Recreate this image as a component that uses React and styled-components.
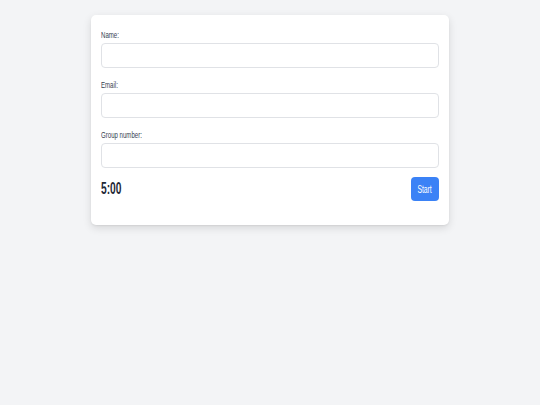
import React, { useState } from "react";
import styled, { createGlobalStyle } from "styled-components";

const GlobalStyle = createGlobalStyle`
  html, body {
    margin: 0;
    padding: 0;
    background: #f3f4f6;
    font-family: "Liberation Sans", Arial, sans-serif;
  }
`;

const Page = styled.div`
  min-height: 405px;
  display: flex;
  justify-content: center;
  align-items: flex-start;
  padding-top: 15px;
  box-sizing: border-box;
`;

const Card = styled.div`
  width: 358px;
  box-sizing: border-box;
  background: #ffffff;
  border-radius: 5px;
  box-shadow: 0 3px 8px rgba(0, 0, 0, 0.12), 0 1px 2px rgba(0, 0, 0, 0.06);
  padding: 12px 10px 24px;
`;

const Field = styled.div`
  display: flex;
  flex-direction: column;
  margin-bottom: 9px;
`;

const Label = styled.label`
  display: block;
  height: 14px;
  margin-bottom: 2px;
  font-size: 9.5px;
  line-height: 16px;
  color: #374151;
  white-space: nowrap;
  transform: scaleX(0.64);
  transform-origin: left center;
`;

const Input = styled.input`
  height: 25px;
  box-sizing: border-box;
  border: 1px solid #e0e2e6;
  border-radius: 4px;
  background: #fff;
  padding: 0 6px;
  outline: none;
`;

const Footer = styled.div`
  display: flex;
  justify-content: space-between;
  align-items: center;
  margin-top: 2px;
`;

const Timer = styled.div`
  font-size: 16px;
  font-weight: bold;
  color: #1f2937;
  transform: scaleX(0.64);
  transform-origin: left center;
`;

const StartButton = styled.button`
  width: 28px;
  height: 24px;
  padding: 0;
  border: none;
  border-radius: 4px;
  background: #3b82f6;
  color: #fff;
  font-family: inherit;
  font-size: 10px;
  cursor: pointer;

  span {
    display: inline-block;
    transform: scaleX(0.68);
  }
`;

const fields = [
  { id: "name", label: "Name:", type: "text" },
  { id: "email", label: "Email:", type: "email" },
  { id: "group", label: "Group number:", type: "text" },
];

export default function App() {
  const [values, setValues] = useState({ name: "", email: "", group: "" });

  return (
    <>
      <GlobalStyle />
      <Page>
        <Card>
          {fields.map((f) => (
            <Field key={f.id}>
              <Label htmlFor={f.id}>{f.label}</Label>
              <Input
                id={f.id}
                type={f.type}
                value={values[f.id]}
                onChange={(e) => setValues({ ...values, [f.id]: e.target.value })}
              />
            </Field>
          ))}
          <Footer>
            <Timer>5:00</Timer>
            <StartButton>
              <span>Start</span>
            </StartButton>
          </Footer>
        </Card>
      </Page>
    </>
  );
}
